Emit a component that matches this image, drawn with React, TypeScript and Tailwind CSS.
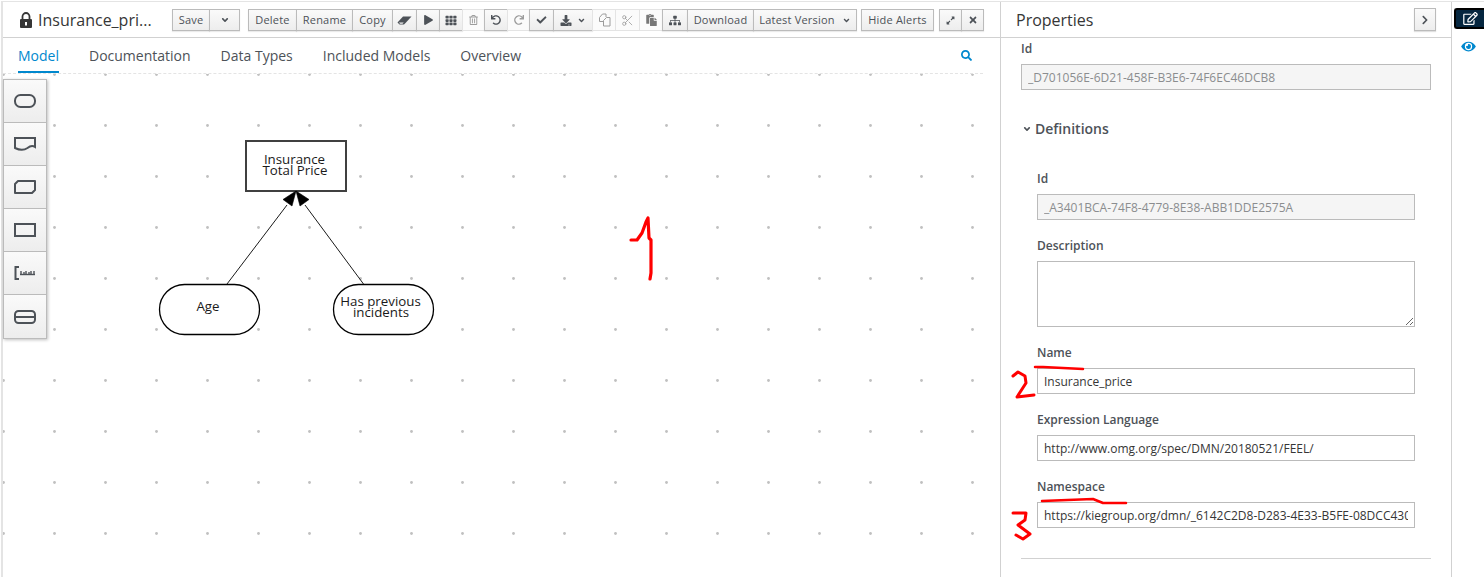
import React from 'react';
import { Scissors } from 'lucide-react';
import {
  FaAngleDown,
  FaCheck,
  FaChevronRight,
  FaDownload,
  FaExpandAlt,
  FaEye,
  FaPlay,
  FaRedo,
  FaRegEdit,
  FaRegTrashAlt,
  FaPaste,
  FaSearch,
  FaSitemap,
  FaTh,
  FaTimes,
  FaUndo,
} from 'react-icons/fa';

interface BtnProps {
  width: string;
  disabled?: boolean;
  children: React.ReactNode;
}

// one segment of a button group, borders collapse with -ml-px
function Btn({ width, disabled, children }: BtnProps) {
  return (
    <button
      className={`${width} -ml-px first:ml-0 h-[22px] flex items-center justify-center gap-[5px] border text-[11px] font-medium tracking-[0.2px] ${
        disabled
          ? 'border-[#e4e4e4] bg-[#fbfbfb] text-[#9c9c9c]'
          : 'border-[#bbbbbb] bg-gradient-to-b from-[#fafafa] to-[#ededed] text-[#4d5258] shadow-[0_1px_1px_rgba(3,3,3,0.08)]'
      }`}
    >
      {children}
    </button>
  );
}

function Toolbar() {
  return (
    <div className="h-[36px] flex items-center border-b border-[#d1d1d1] pt-px">
      <div className="w-[169px] flex items-center pl-[16px] text-[#363636]">
        <svg width="14" height="16" viewBox="0 0 14 16" className="shrink-0">
          <path d="M3.5 7V4.5a3.5 3.5 0 0 1 7 0V7" fill="none" stroke="#363636" strokeWidth="1.8" />
          <rect x="1" y="7" width="12" height="9" rx="1" fill="#363636" />
          <rect x="6" y="10" width="2" height="3.5" fill="#ffffff" />
        </svg>
        <span className="ml-[5px] text-[16px] leading-none">Insurance_pri...</span>
      </div>
      <div className="flex">
        <Btn width="w-[38px]">Save</Btn>
        <Btn width="w-[31px]">
          <FaAngleDown className="w-[10px] h-[10px]" />
        </Btn>
      </div>
      <div className="flex ml-[8px]">
        <Btn width="w-[49px]">Delete</Btn>
        <Btn width="w-[57px]">Rename</Btn>
        <Btn width="w-[41px]">Copy</Btn>
        <Btn width="w-[25px]">
          <svg width="15" height="9" viewBox="0 0 15 9">
            <path d="M0.5 6.5L6 0.5H14.5L9 6.5L7 8.5H2.5Z" fill="#4d5258" />
            <path d="M2 6.5H6.8L5.5 7.8H3Z" fill="#f4f4f4" />
          </svg>
        </Btn>
        <Btn width="w-[24px]"><FaPlay className="w-[9px] h-[10px]" /></Btn>
        <Btn width="w-[24px]"><FaTh className="w-[12px] h-[11px]" /></Btn>
        <Btn width="w-[23px]" disabled><FaRegTrashAlt className="w-[9px] h-[10px]" /></Btn>
        <Btn width="w-[24px]"><FaUndo className="w-[10px] h-[10px]" /></Btn>
        <Btn width="w-[23px]" disabled><FaRedo className="w-[10px] h-[10px]" /></Btn>
        <Btn width="w-[25px]"><FaCheck className="w-[11px] h-[10px]" /></Btn>
        <Btn width="w-[40px]">
          <FaDownload className="w-[12px] h-[11px]" />
          <FaAngleDown className="w-[9px] h-[9px]" />
        </Btn>
        <Btn width="w-[24px]" disabled>
          <svg width="13" height="14" viewBox="0 0 13 14" fill="none" stroke="#9c9c9c" strokeWidth="1">
            <path d="M6 8.5H1.5V4.5L4.5 1H8V4" />
            <path d="M5.5 7.5L8.5 4.5H12V13H5.5Z" fill="#fbfbfb" />
          </svg>
        </Btn>
        <Btn width="w-[25px]" disabled><Scissors className="w-[13px] h-[13px]" strokeWidth={1.5} /></Btn>
        <Btn width="w-[24px]" disabled><FaPaste className="w-[11px] h-[12px] text-[#777777]" /></Btn>
        <Btn width="w-[26px]"><FaSitemap className="w-[12px] h-[11px]" /></Btn>
        <Btn width="w-[67px]">Download</Btn>
        <Btn width="w-[104px]">
          Latest Version
          <FaAngleDown className="w-[9px] h-[9px] ml-[2px]" />
        </Btn>
      </div>
      <div className="flex ml-[4px]">
        <Btn width="w-[73px]">Hide Alerts</Btn>
      </div>
      <div className="flex ml-[5px]">
        <Btn width="w-[23px]"><FaExpandAlt className="w-[9px] h-[9px]" /></Btn>
        <Btn width="w-[23px]"><FaTimes className="w-[10px] h-[10px]" /></Btn>
      </div>
    </div>
  );
}

function Tabs() {
  const tabs = ['Documentation', 'Data Types', 'Included Models', 'Overview'];
  return (
    <div className="h-[35px] flex items-stretch pl-[15px] pr-[28px] text-[14px] text-[#4d5258]">
      <div className="flex items-center pt-[2px] border-b-2 border-[#0088ce] text-[#0088ce]">Model</div>
      {tabs.map((tab) => (
        <div key={tab} className="flex items-center ml-[30px]">{tab}</div>
      ))}
      <div className="flex items-center ml-auto text-[#0088ce]">
        <FaSearch className="w-[11px] h-[11px]" />
      </div>
    </div>
  );
}

function ToolIcon({ children }: { children: React.ReactNode }) {
  return (
    <div className="h-[43px] flex items-center justify-center border-b border-[#bbbbbb] last:border-b-0 bg-gradient-to-b from-[#fafafa] to-[#ededed]">
      <svg width="24" height="18" viewBox="0 0 24 18" fill="none" stroke="#4d5258" strokeWidth="2">
        {children}
      </svg>
    </div>
  );
}

function Palette() {
  return (
    <div className="absolute left-0 top-[5px] w-[44px] border border-[#bbbbbb] shadow-[1px_1px_3px_rgba(0,0,0,0.25)]">
      <ToolIcon><rect x="2" y="3" width="20" height="12" rx="5.5" /></ToolIcon>
      <ToolIcon><path d="M2 3H22V12C19 10 17 11 14.5 13C11 15.5 6 15 2 13Z" /></ToolIcon>
      <ToolIcon><path d="M5 3H22V12L19 15H2V6Z" strokeLinejoin="round" /></ToolIcon>
      <ToolIcon><rect x="2" y="3" width="20" height="12" /></ToolIcon>
      <ToolIcon>
        <path d="M6 3H2.5V15H6" />
        <path d="M7 10.5H22" strokeWidth="1.4" />
        <path d="M8 7V10M11 8V10M13 7V10M16 8V10M18 7V10M21 7V10" strokeWidth="1.4" />
      </ToolIcon>
      <ToolIcon>
        <rect x="2" y="3" width="20" height="12" rx="3.5" />
        <path d="M2 9H22" />
      </ToolIcon>
    </div>
  );
}

function Diagram() {
  return (
    <svg className="absolute inset-0 w-full h-full" fontFamily="'Open Sans', sans-serif" fontSize="13.3" textAnchor="middle" fill="#1a1a1a">
      <defs>
        <pattern id="dots" x="-1" y="-1" width="51" height="51" patternUnits="userSpaceOnUse">
          <circle cx="1.5" cy="1.5" r="1.4" fill="#c0c0c0" />
        </pattern>
      </defs>
      <rect width="100%" height="100%" fill="url(#dots)" />
      <g transform="translate(-3 -74)">
        <rect x="246" y="141" width="100" height="50" fill="#fff" stroke="#404040" strokeWidth="2" />
        <text x="294.5" y="164">Insurance</text>
        <text x="295" y="175">Total Price</text>
        <rect x="159.5" y="284.5" width="100" height="50" rx="25" fill="#fff" stroke="#000" strokeWidth="1.3" />
        <text x="208" y="311">Age</text>
        <rect x="333.5" y="284.5" width="100" height="50" rx="25" fill="#fff" stroke="#000" strokeWidth="1.3" />
        <text x="380.5" y="306">Has previous</text>
        <text x="381" y="317">incidents</text>
        <path d="M227 284L287 205M363.5 284L305 205" stroke="#1a1a1a" strokeWidth="1" />
        <path d="M296 191L292 206L283 199.5ZM296 191L309 199.5L300 206Z" fill="#000" stroke="#000" strokeWidth="0.6" />
      </g>
    </svg>
  );
}

function Field({ label, value, disabled }: { label: string; value: string; disabled?: boolean }) {
  return (
    <div>
      <div className="h-[17px] leading-[17px] text-[12px] font-semibold text-[#4d5258]">{label}</div>
      <input
        readOnly
        value={value}
        className={`block w-full mt-[7px] h-[26px] border border-[#bbbbbb] px-[6px] text-[12px] outline-none ${
          disabled ? 'bg-[#f5f5f5] text-[#8b8d8f]' : 'bg-white text-[#363636]'
        }`}
      />
    </div>
  );
}

function Properties() {
  return (
    <div className="w-[451px] h-full flex flex-col border-l border-[#d1d1d1]">
      <div className="h-[36px] flex items-center justify-between border-b border-[#d1d1d1] pl-[15px] pr-[15px]">
        <span className="text-[16px] text-[#363636] leading-none">Properties</span>
        <button className="w-[22px] h-[23px] flex items-center justify-center border border-[#bbbbbb] bg-gradient-to-b from-[#fafafa] to-[#ededed] text-[#4d5258] shadow-[0_1px_1px_rgba(3,3,3,0.12)]">
          <FaChevronRight className="w-[8px] h-[10px]" />
        </button>
      </div>
      <div className="pt-[2px] pl-[20px] pr-[20px]">
        <Field label="Id" value="_D701056E-6D21-458F-B3E6-74F6EC46DCB8" disabled />
        <div className="mt-[30px] h-[17px] flex items-center text-[14px] font-semibold text-[#4d5258] pl-px">
          <FaAngleDown className="w-[10px] h-[10px] text-[#4d5258]" />
          <span className="ml-[3px]">Definitions</span>
        </div>
        <div className="pt-[33px] pl-[16px] pr-[16px] flex flex-col gap-[17px]">
          <Field label="Id" value="_A3401BCA-74F8-4779-8E38-ABB1DDE2575A" disabled />
          <div>
            <div className="h-[17px] leading-[17px] text-[12px] font-semibold text-[#4d5258]">Description</div>
            <textarea className="block mt-[7px] w-full h-[66px] border border-[#bbbbbb] bg-white" />
          </div>
          <Field label="Name" value="Insurance_price" />
          <Field label="Expression Language" value="http://www.omg.org/spec/DMN/20180521/FEEL/" />
          <Field label="Namespace" value="https://kiegroup.org/dmn/_6142C2D8-D283-4E33-B5FE-08DCC4306A4C" />
        </div>
        <div className="mt-[30px] border-t border-[#d1d1d1]" />
      </div>
    </div>
  );
}

function SideRail() {
  return (
    <div className="flex-1 h-full border-l border-[#d1d1d1] flex flex-col items-end pt-[6px]">
      <div className="w-[30px] h-[21px] flex items-center justify-center rounded-l-[3px] border-2 border-r-0 border-black bg-[#05263f] text-white">
        <FaRegEdit className="w-[15px] h-[13px]" />
      </div>
      <div className="w-[31px] flex justify-center mt-[11px] text-[#0088ce]">
        <FaEye className="w-[15px] h-[13px]" />
      </div>
    </div>
  );
}

// red marker scribbles drawn over the screenshot
function Scribbles() {
  return (
    <svg className="absolute inset-0 w-full h-full pointer-events-none" fill="none" stroke="#ff0000" strokeLinecap="round" strokeLinejoin="round">
      <path strokeWidth="3.2" d="M631 240L637 240L642 233L646 222L648 218L649 238L651 240L651 273L650 279" />
      <path strokeWidth="3" d="M1013 376L1018 372L1025 376L1026 383L1017 397L1034 395" />
      <path strokeWidth="2.5" d="M1035 367L1043 367L1083 369" />
      <path strokeWidth="3" d="M1013 513L1026 513L1025 520L1018 525L1030 534L1023 539L1016 535" />
      <path strokeWidth="2.5" d="M1042 501L1093 499L1103 503L1126 503" />
    </svg>
  );
}

export default function App() {
  return (
    <div className="relative w-[1484px] h-[577px] overflow-hidden bg-white font-['Open_Sans',sans-serif]">
      <div className="h-full pt-px flex">
        <div className="ml-px w-[999px] h-full flex flex-col border-t border-l-2 border-[#e4e4e4]">
          <Toolbar />
          <Tabs />
          <div className="relative flex-1 mr-[17px] border-t border-dashed border-[#e4e4e4]">
            <Diagram />
            <Palette />
          </div>
        </div>
        <div className="flex-1 h-full flex border-t border-[#e4e4e4]">
          <Properties />
          <SideRail />
        </div>
      </div>
      <Scribbles />
    </div>
  );
}
